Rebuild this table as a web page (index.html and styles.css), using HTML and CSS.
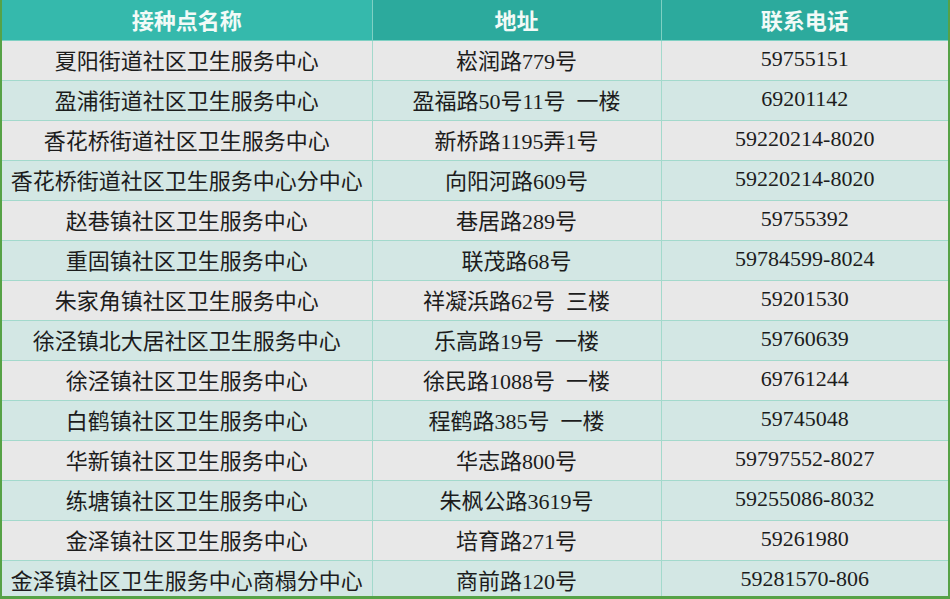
FILE: index.html
```html
<!DOCTYPE html>
<html lang="zh-CN">
<head>
<meta charset="utf-8">
<title>接种点</title>
<link rel="stylesheet" href="styles.css">
</head>
<body>
<div class="frame">
<table class="sites">
<colgroup><col class="c1"><col class="c2"><col class="c3"></colgroup>
<thead>
<tr><th class="h1">接种点名称</th><th>地址</th><th>联系电话</th></tr>
</thead>
<tbody>
<tr><td>夏阳街道社区卫生服务中心</td><td>崧润路779号</td><td>59755151</td></tr>
<tr><td>盈浦街道社区卫生服务中心</td><td>盈福路50号11号&nbsp;&nbsp;一楼</td><td>69201142</td></tr>
<tr><td>香花桥街道社区卫生服务中心</td><td>新桥路1195弄1号</td><td>59220214-8020</td></tr>
<tr><td>香花桥街道社区卫生服务中心分中心</td><td>向阳河路609号</td><td>59220214-8020</td></tr>
<tr><td>赵巷镇社区卫生服务中心</td><td>巷居路289号</td><td>59755392</td></tr>
<tr><td>重固镇社区卫生服务中心</td><td>联茂路68号</td><td>59784599-8024</td></tr>
<tr><td>朱家角镇社区卫生服务中心</td><td>祥凝浜路62号&nbsp;&nbsp;三楼</td><td>59201530</td></tr>
<tr><td>徐泾镇北大居社区卫生服务中心</td><td>乐高路19号&nbsp;&nbsp;一楼</td><td>59760639</td></tr>
<tr><td>徐泾镇社区卫生服务中心</td><td>徐民路1088号&nbsp;&nbsp;一楼</td><td>69761244</td></tr>
<tr><td>白鹤镇社区卫生服务中心</td><td>程鹤路385号&nbsp;&nbsp;一楼</td><td>59745048</td></tr>
<tr><td>华新镇社区卫生服务中心</td><td>华志路800号</td><td>59797552-8027</td></tr>
<tr><td>练塘镇社区卫生服务中心</td><td>朱枫公路3619号</td><td>59255086-8032</td></tr>
<tr><td>金泽镇社区卫生服务中心</td><td>培育路271号</td><td>59261980</td></tr>
<tr><td>金泽镇社区卫生服务中心商榻分中心</td><td>商前路120号</td><td>59281570-806</td></tr>
</tbody>
</table>
</div>
</body>
</html>
```
FILE: styles.css
```css
html, body {
  margin: 0;
  padding: 0;
  background: #ffffff;
}
.frame {
  width: 950px;
  height: 599px;
  overflow: hidden;
  box-sizing: border-box;
  border-left: 2px solid #56a246;
  border-right: 2px solid #56a246;
  border-bottom: 3px solid #56a246;
  background: #d3e7e4;
}
.sites {
  width: 946px;
  table-layout: fixed;
  border-collapse: collapse;
  font-family: "Liberation Serif", "Noto Sans CJK SC", serif;
  font-size: 22px;
  color: #1c1c1c;
}
.c1 { width: 370px; }
.c2 { width: 289px; }
.c3 { width: 287px; }
.sites th, .sites td {
  height: 40px;
  padding: 0 0 2px 0;
  text-align: center;
  vertical-align: middle;
  white-space: nowrap;
  box-sizing: border-box;
  border: 1px solid #a3d9cc;
}
.sites tr > :first-child { border-left: none; }
.sites tr > :last-child { border-right: none; }
.sites thead tr > * { border-top: none; }
.sites th {
  background: #2caa9d;
  color: #f2faf7;
  font-weight: bold;
  font-size: 22px;
  border-color: #7fd0c3;
}
.sites th.h1 {
  background: #35b9ac;
}
.sites tbody tr:nth-child(odd) td {
  background: #e8e8e8;
}
.sites tbody tr:nth-child(even) td {
  background: #d3e7e4;
}
```
